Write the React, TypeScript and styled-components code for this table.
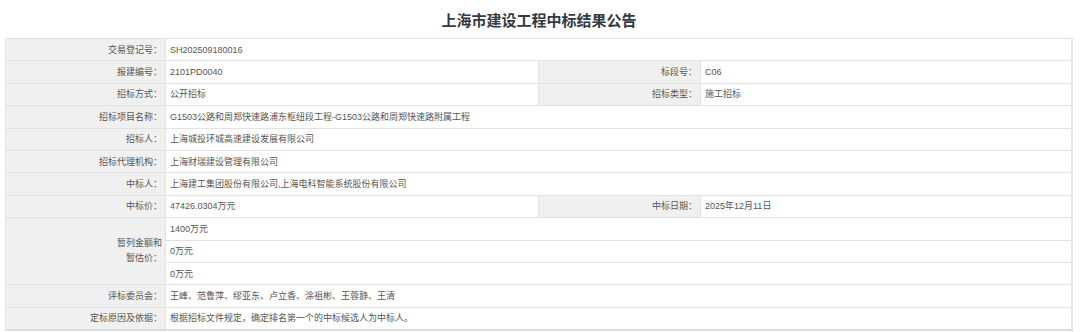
import styled, { createGlobalStyle } from 'styled-components';

const GlobalStyle = createGlobalStyle`
  html, body {
    margin: 0;
    padding: 0;
    background: #ffffff;
  }
  body {
    font-family: "Liberation Sans", "Noto Sans CJK SC", sans-serif;
  }
`;

interface Field {
  label: string;
  value: string;
}

type Row =
  | { kind: 'single'; field: Field }
  | { kind: 'pair'; left: Field; right: Field };

const rows: Row[] = [
  { kind: 'single', field: { label: '交易登记号：', value: 'SH202509180016' } },
  {
    kind: 'pair',
    left: { label: '报建编号：', value: '2101PD0040' },
    right: { label: '标段号：', value: 'C06' },
  },
  {
    kind: 'pair',
    left: { label: '招标方式：', value: '公开招标' },
    right: { label: '招标类型：', value: '施工招标' },
  },
  {
    kind: 'single',
    field: {
      label: '招标项目名称：',
      value: 'G1503公路和周郑快速路浦东枢纽段工程-G1503公路和周郑快速路附属工程',
    },
  },
  { kind: 'single', field: { label: '招标人：', value: '上海城投环城高速建设发展有限公司' } },
  { kind: 'single', field: { label: '招标代理机构：', value: '上海财瑞建设管理有限公司' } },
  {
    kind: 'single',
    field: { label: '中标人：', value: '上海建工集团股份有限公司,上海电科智能系统股份有限公司' },
  },
  {
    kind: 'pair',
    left: { label: '中标价：', value: '47426.0304万元' },
    right: { label: '中标日期：', value: '2025年12月11日' },
  },
];

const provisional = ['1400万元', '0万元', '0万元'];

const tailRows: Field[] = [
  { label: '评标委员会：', value: '王峰、范鲁萍、缪亚东、卢立香、涂祖彬、王蓉静、王清' },
  { label: '定标原因及依据：', value: '根据招标文件规定，确定排名第一个的中标候选人为中标人。' },
];

const App = () => {
  return (
    <Sty.Page>
      <GlobalStyle />
      <Sty.Title>上海市建设工程中标结果公告</Sty.Title>
      <Sty.Table>
        <colgroup>
          <col style={{ width: 160 }} />
          <col style={{ width: 373 }} />
          <col style={{ width: 162 }} />
          <col />
        </colgroup>
        <tbody>
          {rows.map((row, i) =>
            row.kind === 'single' ? (
              <tr key={i}>
                <Sty.Label>{row.field.label}</Sty.Label>
                <Sty.Value colSpan={3}>{row.field.value}</Sty.Value>
              </tr>
            ) : (
              <tr key={i}>
                <Sty.Label>{row.left.label}</Sty.Label>
                <Sty.Value>{row.left.value}</Sty.Value>
                <Sty.Label>{row.right.label}</Sty.Label>
                <Sty.Value>{row.right.value}</Sty.Value>
              </tr>
            )
          )}
          {provisional.map((v, i) => (
            <tr key={'p' + i}>
              {i === 0 && (
                <Sty.Label rowSpan={3} $tall>
                  暂列金额和
                  <br />
                  暂估价：
                </Sty.Label>
              )}
              <Sty.Value colSpan={3}>{v}</Sty.Value>
            </tr>
          ))}
          {tailRows.map((f, i) => (
            <tr key={'t' + i}>
              <Sty.Label>{f.label}</Sty.Label>
              <Sty.Value colSpan={3}>{f.value}</Sty.Value>
            </tr>
          ))}
        </tbody>
      </Sty.Table>
    </Sty.Page>
  );
};

const Sty = {
  Page: styled.div`
    width: 1080px;
    padding: 0 7px 0 5px;
    box-sizing: border-box;
  `,
  Title: styled.h1`
    margin: 0;
    height: 38px;
    display: flex;
    align-items: center;
    justify-content: center;
    font-family: "Noto Sans CJK SC", sans-serif;
    font-size: 15px;
    font-weight: 700;
    color: #333a45;
    padding-top: 1px;
    box-sizing: border-box;
  `,
  Table: styled.table`
    width: 100%;
    border-collapse: collapse;
    table-layout: fixed;
    border: 1px solid #e2e2e2;
    border-right: 2px solid #e6e6e6;
    border-bottom: 2px solid #dcdcdc;

    tr {
      height: 22.4px;
    }
  `,
  Label: styled.th<{ $tall?: boolean }>`
    background: #f0f0f0;
    color: #555;
    font-size: 9px;
    font-weight: 400;
    text-align: right;
    padding: 0 3px 0 4px;
    line-height: ${({ $tall }) => ($tall ? '15px' : '12px')};
    border: 1px solid #e2e2e2;
    white-space: nowrap;
  `,
  Value: styled.td`
    background: #ffffff;
    color: #555;
    font-size: 9px;
    text-align: left;
    padding: 0 4px;
    line-height: 12px;
    border: 1px solid #e2e2e2;
    white-space: nowrap;
  `,
};

export default App;
